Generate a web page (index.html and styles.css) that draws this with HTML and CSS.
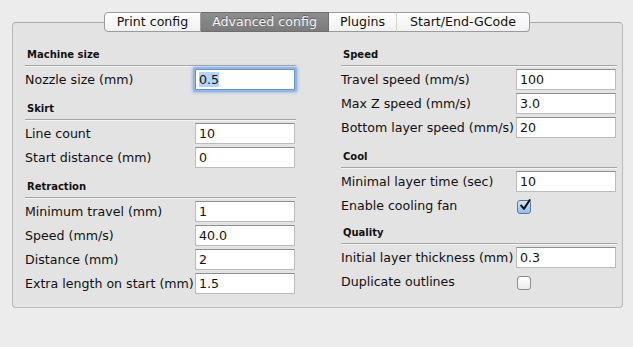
FILE: index.html
```html
<!DOCTYPE html>
<html>
<head>
<meta charset="utf-8">
<link rel="stylesheet" href="styles.css">
</head>
<body>
<div class="window">
  <div class="tabs">
    <div class="tab t1">Print config</div>
    <div class="tab t2 active">Advanced config</div>
    <div class="tab t3">Plugins</div>
    <div class="tab t4">Start/End-GCode</div>
  </div>
  <div class="panel">
    <div class="col left">
      <div class="hdr">Machine size</div>
      <div class="row"><span class="lbl">Nozzle size (mm)</span><div class="field focus"><span class="sel">0.5</span></div></div>
      <div class="hdr">Skirt</div>
      <div class="row"><span class="lbl">Line count</span><div class="field">10</div></div>
      <div class="row"><span class="lbl">Start distance (mm)</span><div class="field">0</div></div>
      <div class="hdr">Retraction</div>
      <div class="row"><span class="lbl">Minimum travel (mm)</span><div class="field">1</div></div>
      <div class="row"><span class="lbl">Speed (mm/s)</span><div class="field">40.0</div></div>
      <div class="row"><span class="lbl">Distance (mm)</span><div class="field">2</div></div>
      <div class="row"><span class="lbl">Extra length on start (mm)</span><div class="field">1.5</div></div>
    </div>
    <div class="col right">
      <div class="hdr">Speed</div>
      <div class="row"><span class="lbl">Travel speed (mm/s)</span><div class="field">100</div></div>
      <div class="row"><span class="lbl">Max Z speed (mm/s)</span><div class="field">3.0</div></div>
      <div class="row"><span class="lbl">Bottom layer speed (mm/s)</span><div class="field">20</div></div>
      <div class="hdr">Cool</div>
      <div class="row"><span class="lbl">Minimal layer time (sec)</span><div class="field">10</div></div>
      <div class="row crow"><span class="lbl">Enable cooling fan</span><div class="check on"><svg width="14" height="14" viewBox="0 0 14 14"><path d="M3.2 6.6 L6 9.8 L11.6 1.2" fill="none" stroke="#111" stroke-width="2.1" stroke-linecap="round" stroke-linejoin="round"/></svg></div></div>
      <div class="hdr">Quality</div>
      <div class="row"><span class="lbl">Initial layer thickness (mm)</span><div class="field">0.3</div></div>
      <div class="row crow"><span class="lbl">Duplicate outlines</span><div class="check"></div></div>
    </div>
  </div>
</div>
</body>
</html>
```
FILE: styles.css
```css
html, body {
  margin: 0;
  padding: 0;
  background: #ececec;
  font-family: "DejaVu Sans", "Liberation Sans", sans-serif;
  font-size: 12.6px;
  color: #111;
}
.window {
  padding: 12px 11px 0 12px;
}
.tabs {
  display: flex;
  justify-content: center;
  position: relative;
  z-index: 2;
}
.tab {
  height: 18px;
  line-height: 18px;
  text-align: center;
  border: 1px solid #9b9b9b;
  border-left: none;
  background: linear-gradient(#ffffff, #f1f1f1);
  color: #111;
  box-sizing: content-box;
}
.t1 { width: 95px; border-left: 1px solid #9b9b9b; border-radius: 4px 0 0 4px; }
.t2 { width: 127px; }
.t3 { width: 67px; border-right: 1px solid #d2d2d2; }
.t4 { width: 132px; border-radius: 0 4px 4px 0; }
.tab.active {
  background: linear-gradient(#8d8d8d, #7b7b7b);
  color: #f4f4f4;
  border-color: #6f6f6f;
  text-shadow: 0 -1px 0 rgba(0,0,0,0.35);
}
.panel {
  margin-top: -10px;
  height: 268px;
  background: #e3e3e3;
  border: 1px solid #bababa;
  border-top-color: #a9a9a9;
  border-radius: 4px;
  display: flex;
  gap: 45px;
  padding: 16px 4px 0 12px;
  box-sizing: content-box;
  width: 593px;
}
.col { display: flex; flex-direction: column; }
.left { width: 271px; }
.right { width: 276px; }
.hdr {
  font-weight: bold;
  font-size: 10px;
  line-height: 14px;
  height: 14px;
  padding: 9px 0 3px 2px;
  border-bottom: 1px solid #a5a5a5;
  box-shadow: 0 1px 0 #f4f4f4;
  margin-bottom: 3px;
}
.row {
  display: grid;
  align-items: center;
  height: 24px;
}
.left .row { grid-template-columns: 170px 99px; }
.right .row { grid-template-columns: 175px 99px; }
.right .crow { height: 22px; }
.lbl { white-space: nowrap; line-height: 21px; align-self: start; }
.field {
  align-self: start;
  height: 19px;
  line-height: 19px;
  background: #fff;
  border: 1px solid #bcbcbc;
  border-top-color: #8e8e8e;
  padding-left: 3px;
  box-sizing: content-box;
  width: 95px;
}
.field.focus {
  border-color: #6d93c8;
  box-shadow: 0 0 0 2px #93b5e3, 0 0 3px 3px rgba(120,160,215,0.5);
  border-radius: 1px;
}
.sel { background: #b5d3fb; }
.check {
  width: 12px;
  height: 12px;
  border: 1px solid #8d8d8d;
  border-radius: 3px;
  background: linear-gradient(#ffffff, #ececec);
  position: relative;
  margin-top: 1px;
  margin-left: 1px;
}
.check.on {
  background: linear-gradient(#d6e8fb, #8fbbea);
  border-color: #5b7aa3;
}
.check svg {
  position: absolute;
  left: 0;
  top: -2px;
}
```
